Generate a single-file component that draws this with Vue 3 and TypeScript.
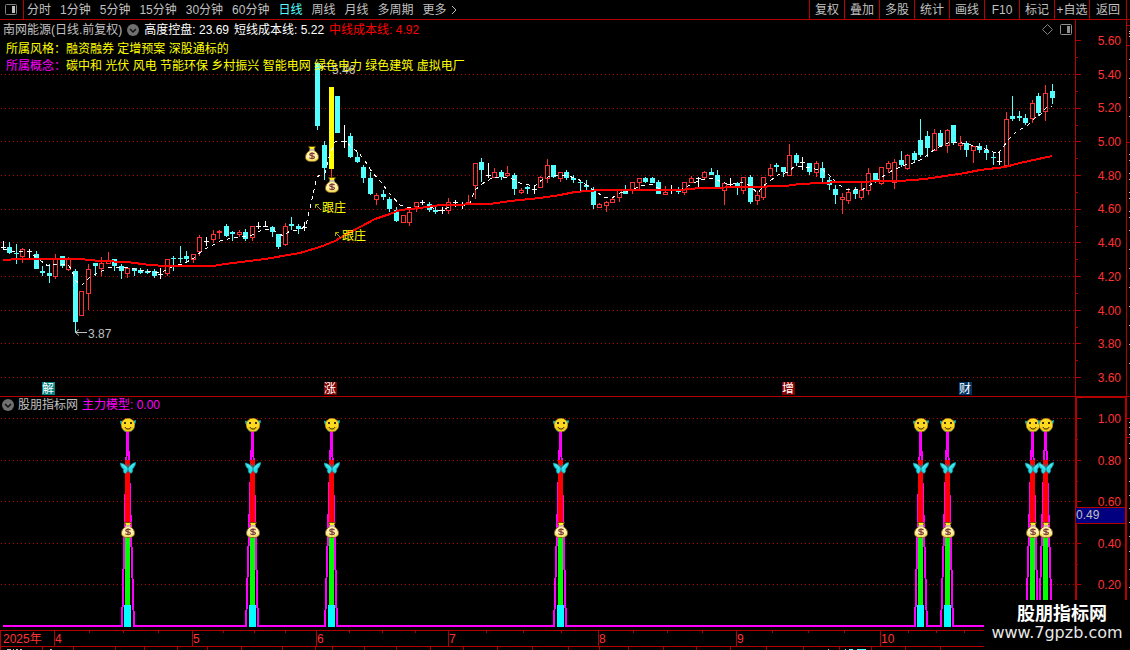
<script setup lang="ts">
type Kind = 'r' | 'c' | 'w' | 'y'
type Candle = [kind: Kind, high: number, top: number, bottom: number, low: number]

const periods = ['分时', '1分钟', '5分钟', '15分钟', '30分钟', '60分钟', '日线', '周线', '月线', '多周期']
const tools = ['复权', '叠加', '多股', '统计', '画线', 'F10', '标记', '+自选', '返回']
const prices = ['5.60', '5.40', '5.20', '5.00', '4.80', '4.60', '4.40', '4.20', '4.00', '3.80', '3.60']
const priceY = [40, 74, 108, 141, 175, 209, 242, 276, 310, 343, 377]
const levels = ['1.00', '0.80', '0.60', '0.40', '0.20']
const levelY = [418, 460, 501, 543, 584]

const candles: Candle[] = [
  ['w', 241, 247, 247, 250], ['c', 242, 247, 253, 254], ['c', 244, 253, 254, 264], ['r', 248, 249, 257, 263],
  ['w', 249, 251, 251, 258], ['c', 251, 254, 269, 269], ['c', 266, 271, 273, 276], ['c', 264, 273, 276, 283],
  ['r', 254, 259, 277, 279], ['c', 256, 256, 266, 268], ['r', 257, 259, 270, 271], ['c', 269, 271, 322, 332],
  ['r', 291, 291, 316, 316], ['r', 264, 269, 294, 310], ['c', 263, 263, 266, 276], ['r', 257, 263, 269, 276],
  ['r', 252, 261, 264, 264], ['c', 259, 259, 266, 271], ['c', 264, 266, 271, 279], ['r', 267, 268, 274, 278],
  ['c', 268, 268, 271, 276], ['c', 268, 270, 273, 274], ['c', 269, 271, 273, 274], ['c', 269, 271, 276, 278],
  ['w', 268, 274, 274, 279], ['r', 259, 259, 274, 276], ['c', 256, 258, 259, 271], ['c', 246, 258, 259, 263],
  ['c', 251, 256, 259, 263], ['r', 254, 254, 260, 263], ['r', 235, 237, 252, 256], ['w', 237, 241, 241, 246],
  ['r', 230, 234, 240, 243], ['r', 230, 231, 233, 239], ['c', 224, 226, 236, 237], ['c', 231, 232, 234, 241],
  ['r', 230, 232, 235, 237], ['c', 229, 232, 239, 241], ['r', 226, 226, 238, 241], ['w', 222, 226, 226, 229],
  ['w', 221, 226, 226, 227], ['c', 226, 227, 232, 237], ['c', 234, 234, 247, 249], ['r', 223, 226, 245, 246],
  ['c', 217, 224, 226, 230], ['c', 224, 226, 229, 234], ['w', 222, 227, 227, 231], ['w', 0, 0, 0, 0],
  ['c', 63, 63, 126, 130], ['c', 141, 145, 168, 180], ['y', 87, 87, 169, 178], ['c', 96, 96, 133, 133],
  ['w', 125, 141, 141, 148], ['c', 133, 136, 157, 158], ['c', 152, 157, 162, 163], ['c', 165, 167, 178, 183],
  ['c', 172, 178, 194, 195], ['r', 193, 195, 200, 205], ['c', 190, 194, 197, 200], ['c', 197, 199, 209, 212],
  ['c', 207, 210, 221, 222], ['r', 215, 215, 223, 223], ['r', 210, 212, 223, 226], ['r', 202, 202, 207, 212],
  ['w', 200, 202, 202, 205], ['c', 202, 204, 210, 212], ['c', 207, 210, 212, 214], ['w', 207, 210, 210, 214],
  ['r', 198, 202, 211, 214], ['w', 200, 202, 202, 207], ['w', 202, 204, 204, 209], ['r', 195, 202, 203, 203],
  ['r', 163, 163, 186, 199], ['c', 158, 162, 170, 182], ['w', 163, 175, 175, 178], ['r', 168, 172, 178, 178],
  ['c', 170, 172, 177, 180], ['r', 166, 173, 176, 177], ['c', 173, 175, 189, 195], ['r', 188, 190, 193, 194],
  ['c', 186, 187, 189, 194], ['w', 186, 189, 189, 194], ['r', 176, 177, 188, 188], ['r', 159, 165, 179, 183],
  ['c', 165, 165, 177, 178], ['r', 172, 172, 179, 182], ['c', 170, 172, 178, 180], ['c', 175, 178, 180, 183],
  ['c', 180, 182, 183, 192], ['c', 180, 185, 187, 190], ['c', 187, 189, 205, 209], ['r', 203, 204, 208, 208],
  ['r', 201, 202, 206, 212], ['r', 198, 199, 203, 203], ['r', 190, 190, 198, 202], ['c', 185, 190, 194, 194],
  ['r', 182, 182, 190, 194], ['r', 178, 178, 183, 190], ['c', 177, 178, 182, 183], ['c', 177, 178, 183, 183],
  ['c', 180, 182, 194, 194], ['r', 186, 192, 195, 195], ['w', 185, 190, 190, 194], ['c', 187, 190, 192, 194],
  ['r', 182, 182, 193, 195], ['r', 176, 178, 183, 183], ['w', 177, 178, 178, 188], ['r', 171, 172, 178, 180],
  ['c', 168, 172, 175, 175], ['c', 170, 175, 189, 189], ['r', 183, 183, 191, 205], ['w', 178, 184, 184, 187],
  ['c', 182, 183, 188, 195], ['r', 177, 177, 191, 194], ['c', 175, 177, 202, 204], ['r', 191, 195, 201, 205],
  ['r', 177, 177, 198, 200], ['r', 164, 168, 176, 177], ['c', 163, 165, 167, 172], ['c', 167, 167, 172, 177],
  ['r', 144, 155, 176, 176], ['c', 153, 155, 163, 166], ['w', 157, 162, 162, 170], ['c', 163, 163, 172, 175],
  ['r', 161, 163, 173, 177], ['c', 162, 168, 178, 182], ['c', 177, 180, 185, 190], ['c', 185, 189, 195, 204],
  ['r', 193, 197, 200, 214], ['r', 188, 192, 201, 204], ['c', 187, 190, 194, 199], ['r', 182, 190, 198, 200],
  ['r', 168, 173, 191, 195], ['c', 173, 173, 181, 183], ['r', 167, 167, 184, 185], ['r', 161, 163, 169, 173],
  ['r', 159, 162, 183, 189], ['c', 151, 160, 165, 167], ['r', 154, 155, 169, 170], ['c', 151, 153, 160, 163],
  ['c', 119, 140, 155, 157], ['c', 131, 136, 148, 157], ['r', 129, 133, 151, 151], ['c', 130, 133, 146, 146],
  ['r', 129, 130, 146, 153], ['c', 125, 125, 143, 145], ['r', 136, 143, 146, 150], ['c', 141, 143, 150, 157],
  ['r', 146, 146, 151, 163], ['c', 143, 146, 150, 153], ['c', 145, 150, 153, 160], ['c', 152, 157, 158, 165],
  ['w', 153, 161, 161, 165], ['r', 112, 119, 166, 166], ['c', 96, 116, 119, 121], ['c', 111, 116, 118, 121],
  ['c', 114, 118, 123, 125], ['r', 100, 103, 119, 123], ['c', 93, 96, 113, 116], ['r', 85, 93, 112, 121],
  ['c', 84, 91, 98, 104],
]

const barX = (i: number): number => Math.floor(3.25 + i * 6.555)
const colors: Record<Kind, string> = { r: '#ff3232', c: '#54ffff', w: '#ffffff', y: '#ffff00' }
const bars = candles
  .map(([kind, high, top, bottom, low], i) => ({ kind, high, top, bottom, low, x: barX(i), color: colors[kind] }))
  .filter((b) => b.low > 0)

const midLine =
  '3,260 20,259 80,259 100,261 127,262 150,265 165,266 213,266 225,264 265,259 300,253 320,247 335,241 345,235 360,227 375,219 390,214 400,210 420,208 440,205 490,204 510,201 540,198 560,195 575,192 600,190 680,190 700,188 750,187 785,186 800,184 840,182 900,181 925,179 945,176 965,173 980,170 1005,167 1020,163 1052,156'
const shortLine =
  '3,249 16,252 28,251 36,257 48,266 57,264 68,264 72,271 76,281 82,285 90,277 100,272 108,268 115,267 130,268 145,271 160,273 172,267 185,263 194,258 203,250 213,245 220,241 232,238 250,236 262,230 272,229 277,232 283,236 290,231 300,230 306,225 312,199 317,177 320,175 325,173 329,157 335,142 346,141 351,147 358,152 365,161 372,172 380,181 390,194 400,205 408,208 418,207 428,206 440,211 452,206 465,205 470,203 475,190 482,184 492,178 505,177 515,180 522,184 535,186 543,179 550,176 565,175 578,179 588,186 595,191 604,197 612,198 620,193 632,190 640,186 652,184 658,188 665,190 680,190 690,185 700,180 712,178 722,182 730,185 740,182 746,183 752,188 758,193 763,186 770,181 778,175 788,172 795,166 800,166 815,169 822,169 830,176 838,184 845,189 862,190 870,185 878,180 885,175 893,170 905,165 917,162 925,157 935,149 950,142 962,143 975,146 985,149 998,154 1003,147 1010,138 1017,131 1027,126 1035,118 1041,114 1047,107 1052,106'

const events = [
  { x: 42, text: '解', fill: '#008080' },
  { x: 324, text: '涨', fill: '#800000' },
  { x: 782, text: '增', fill: '#800000' },
  { x: 959, text: '财', fill: '#003468' },
]

const spikes = [19, 38, 50, 85, 140, 144, 157, 159]
const spikeX = spikes.map(barX)
const modelLine = [
  '3,626',
  ...spikes.flatMap((i) => [`${barX(i - 1) + 1},626`, `${barX(i) + 0.5},419`, `${barX(i + 1)},626`]),
  '1052,626',
].join(' ')

const months = [
  { label: '2025年', span: 54 },
  { label: '4', span: 138 },
  { label: '5', span: 124 },
  { label: '6', span: 132 },
  { label: '7', span: 150 },
  { label: '8', span: 138 },
  { label: '9', span: 144 },
  { label: '10', span: 195 },
]
const monthColumns = months.map((m) => `minmax(0, ${m.span}fr)`).join(' ')
const weekTicks = [89, 123, 158, 223, 254, 285, 349, 382, 415, 486, 523, 561, 633, 667, 702, 772, 808, 844, 908, 936, 964]
const footTicks = [0, 42, 73, 115, 144, 177, 207, 241, 282, 315, 332, 364, 396, 430, 463, 497, 532, 568, 599, 628, 663, 696, 730, 766, 803, 839, 871, 905, 940]
const edgeMarks = [31, 33, 36, 59, 78, 97, 116, 154, 160, 173, 179, 192, 198, 211, 217, 230, 249, 268, 287, 306, 325, 344, 363]
const edgeMarksLow = [422, 427, 434, 443, 458, 481, 495, 508, 522, 536, 551, 569, 587]
</script>

<template>
  <div class="app">
    <svg class="defs" aria-hidden="true">
      <symbol id="bag" viewBox="0 0 14 16">
        <path d="M3.5 0.5 L10.5 0.5 L9 3.5 L5 3.5Z" fill="#ffee20" stroke="#5a4000" stroke-width="0.8" />
        <path d="M5 4.5 L9 4.5 C12 6 13.5 8.5 13.5 11 C13.5 14 11.5 15.5 7 15.5 C2.5 15.5 0.5 14 0.5 11 C0.5 8.5 2 6 5 4.5Z" fill="#fff4a8" stroke="#8a6418" stroke-width="1" />
        <path d="M1.5 12 C2.5 15 11.5 15 12.5 12" fill="none" stroke="#f2dc48" stroke-width="1.2" />
        <path d="M4.5 4 H9.5" stroke="#ffffff" stroke-width="1.2" />
        <path d="M9.5 8 C8.5 6.8 4.8 6.7 4.7 8.5 C4.7 10.3 9.5 9.3 9.5 11.2 C9.4 13 5.3 13 4.3 11.7 M7 6.3 V13.3" fill="none" stroke="#843c38" stroke-width="1.2" />
      </symbol>
      <symbol id="smile" viewBox="0 0 14 14">
        <circle cx="7" cy="7" r="6.8" fill="#ffd820" stroke="#9a7410" stroke-width="0.5" />
        <path d="M2 9 A5.5 5.5 0 0 0 12 9" fill="none" stroke="#f0bc14" stroke-width="1" />
        <rect x="3" y="4" width="2" height="2" fill="#403000" />
        <rect x="9" y="4" width="2" height="2" fill="#403000" />
        <path d="M4 9 C4.5 11.7 9.5 11.7 10 9" fill="none" stroke="#302400" stroke-width="1" />
      </symbol>
      <symbol id="butterfly" viewBox="0 0 16 12">
        <path d="M7.5 5.5 C5 2 2.5 1 0 1 C0.5 4 2 6.5 3.5 7 C2.5 9 4 11.5 5.5 11.8 C7 10.5 7.5 9 8 8 C8.5 9 9.5 11 11 11.4 C12.8 10.5 13 8.5 12.5 7 C14 6 15.5 3 16 0.5 C13 0.5 10.5 2.5 8.5 5.5Z" fill="#28dce8" stroke="#0a8890" stroke-width="0.6" />
        <path d="M8 8 V5 M8 5 L6 1.5 M8 5 L10 1.5" fill="none" stroke="#0c8890" stroke-width="0.8" />
        <path d="M2 2.5 L6.5 6 M14 2 L9.5 6" stroke="#70f4f8" stroke-width="0.8" />
      </symbol>
    </svg>

    <nav class="toolbar">
      <button class="layout" aria-label="布局">
        <svg width="12" height="11" viewBox="0 0 12 11"><rect x="0.5" y="0.5" width="11" height="10" rx="1" fill="none" stroke="#808080" /><rect x="7" y="2" width="3" height="7" fill="#c0c0c0" /></svg>
      </button>
      <div class="periods">
        <button v-for="p in periods" :key="p" :class="{ active: p === '日线' }">{{ p }}</button>
        <button class="more">更多<svg width="6" height="10" viewBox="0 0 6 10"><path d="M1 1 L5 5 L1 9" fill="none" stroke="#c0c0c0" /></svg></button>
      </div>
      <div class="tools">
        <button v-for="t in tools" :key="t">{{ t }}</button>
      </div>
      <span class="edge-cap"></span>
    </nav>

    <section class="panel">
      <div class="plot">
        <svg class="chart" viewBox="0 20 1075 376">
          <g class="grid">
            <line v-for="y in priceY.slice(1)" :key="y" x1="1" x2="1075" :y1="y + 0.5" :y2="y + 0.5" />
          </g>
          <g shape-rendering="crispEdges">
            <template v-for="b in bars" :key="b.x">
              <rect :x="b.x" :y="b.high" width="1" :height="b.low - b.high" :fill="b.kind === 'y' ? '#ff3232' : b.color" />
              <rect v-if="b.kind === 'w'" :x="b.x - 2" :y="b.top" width="5" height="1" fill="#ffffff" />
              <rect v-else-if="b.kind === 'r' && b.bottom - b.top > 2" :x="b.x - 1.5" :y="b.top + 0.5" width="4" :height="b.bottom - b.top - 1" fill="#000000" stroke="#ff3232" />
              <rect v-else :x="b.x - 2" :y="b.top" width="5" :height="b.bottom - b.top" :fill="b.color" />
            </template>
            <polyline :points="shortLine" fill="none" stroke="#ffffff" stroke-dasharray="4 4" />
            <polyline :points="midLine" fill="none" stroke="#ff0000" stroke-width="2" />
          </g>
          <use href="#bag" x="305" y="146" width="14" height="16" />
          <use href="#bag" x="325" y="177" width="14" height="16" />
          <g fill="none" stroke="#a8a800">
            <path d="M315.5 208 V204.5 H319 M315.5 204.5 L321 210" />
            <path d="M335.5 236 V232.5 H339 M335.5 232.5 L341 238" />
          </g>
          <g fill="none" stroke="#c0c0c0">
            <path d="M75 332.5 H87 M79 329.5 L75.5 332.5 L79 335.5" />
            <path d="M319 66.5 H330 M323 63.5 L319.5 66.5 L323 69.5" />
          </g>
          <g class="note" fill="#ffff00">
            <text x="322" y="212">跟庄</text>
            <text x="342" y="240">跟庄</text>
          </g>
          <g class="note" fill="#c0c0c0">
            <text x="88" y="338">3.87</text>
            <text x="332" y="74">5.46</text>
          </g>
          <g class="note" fill="#ffffff">
            <template v-for="e in events" :key="e.x">
              <rect :x="e.x" y="382" width="13" height="13" :fill="e.fill" />
              <text :x="e.x" y="393">{{ e.text }}</text>
            </template>
          </g>
        </svg>

        <header class="legend">
          <div class="legend-row">
            <span>南网能源(日线.前复权)</span>
            <button class="fold" aria-label="收起主图">
              <svg width="12" height="12" viewBox="0 0 12 12"><circle cx="6" cy="6" r="6" fill="#707070" /><path d="M3 5 L6 8 L9 5" fill="none" stroke="#101010" stroke-width="1.5" /></svg>
            </button>
            <span class="white">高度控盘: 23.69</span>
            <span class="white">短线成本线: 5.22</span>
            <span class="red">中线成本线: 4.92</span>
          </div>
          <div class="tag-row yellow"><span>所属风格：</span><span>融资融券 定增预案 深股通标的</span></div>
          <div class="tag-row yellow"><span class="magenta">所属概念：</span><span>碳中和 光伏 风电 节能环保 乡村振兴 智能电网 绿色电力 绿色建筑 虚拟电厂</span></div>
        </header>
        <div class="corner">
          <button aria-label="标记点"><svg width="11" height="11" viewBox="0 0 11 11"><path d="M5.5 0.5 L10.5 5.5 L5.5 10.5 L0.5 5.5Z" fill="none" stroke="#808080" /></svg></button>
          <button aria-label="侧栏"><svg width="12" height="11" viewBox="0 0 12 11"><rect x="0.5" y="0.5" width="11" height="10" rx="1" fill="none" stroke="#909090" /><rect x="7" y="2" width="3" height="7" fill="#909090" /></svg></button>
        </div>
      </div>

      <div class="axis">
        <svg class="ticks" viewBox="0 20 51 376" preserveAspectRatio="none" shape-rendering="crispEdges">
          <rect x="0" y="20" width="1" height="376" />
          <rect v-for="y in priceY" :key="y" x="1" :y="y" width="5" height="1" />
          <rect v-for="y in priceY.slice(0, -1)" :key="'m' + y" x="1" :y="y + 17" width="2" height="1" />
        </svg>
        <div class="labels price"><span v-for="p in prices" :key="p">{{ p }}</span></div>
      </div>
      <div class="edge">
        <svg viewBox="0 20 4 376" preserveAspectRatio="none" shape-rendering="crispEdges">
          <rect x="0" y="20" width="1" height="376" fill="#b40000" />
          <rect v-for="y in [25, 45, 142]" :key="y" x="1" :y="y" width="3" height="1" fill="#b40000" />
          <rect v-for="y in edgeMarks" :key="'e' + y" x="3" :y="y" width="1" height="1" fill="#c0c0c0" />
        </svg>
      </div>
    </section>

    <section class="panel lower">
      <div class="plot">
        <svg class="chart" viewBox="0 397 1075 233">
          <g class="grid">
            <line v-for="y in levelY" :key="y" x1="1" x2="1075" :y1="y + 0.5" :y2="y + 0.5" />
          </g>
          <polyline :points="modelLine" fill="none" stroke="#ff00ff" stroke-width="2" stroke-linejoin="bevel" shape-rendering="crispEdges" />
          <template v-for="x in spikeX" :key="x">
            <g shape-rendering="crispEdges">
              <rect :x="x - 2" y="460" width="5" height="66" fill="#ff0000" />
              <rect :x="x - 2" y="534" width="5" height="71" fill="#00ff00" />
              <rect :x="x - 3" y="605" width="7" height="22" fill="#00ffff" />
            </g>
            <use href="#butterfly" :x="x - 7" y="420" width="16" height="12" />
            <use href="#smile" :x="x - 6" y="418" width="14" height="14" />
            <use href="#butterfly" :x="x - 7" y="462" width="16" height="12" />
            <use href="#bag" :x="x - 6" y="522" width="14" height="16" />
          </template>
        </svg>
        <header class="legend sub">
          <div class="legend-row">
            <button class="fold" aria-label="收起副图">
              <svg width="12" height="12" viewBox="0 0 12 12"><circle cx="6" cy="6" r="6" fill="#707070" /><path d="M3 5 L6 8 L9 5" fill="none" stroke="#101010" stroke-width="1.5" /></svg>
            </button>
            <span>股朋指标网</span>
            <span class="magenta">主力模型: 0.00</span>
          </div>
        </header>
      </div>

      <div class="axis framed">
        <svg class="ticks" viewBox="0 397 51 233" preserveAspectRatio="none" shape-rendering="crispEdges">
          <rect v-for="y in levelY" :key="y" x="1" :y="y" width="5" height="1" />
          <rect v-for="y in levelY" :key="'m' + y" x="1" :y="y + 21" width="2" height="1" />
        </svg>
        <div class="labels level"><span v-for="l in levels" :key="l">{{ l }}</span></div>
        <output class="cursor">0.49</output>
      </div>
      <div class="edge">
        <svg viewBox="0 397 4 233" preserveAspectRatio="none" shape-rendering="crispEdges">
          <rect x="0" y="397" width="1" height="233" fill="#b40000" />
          <rect v-for="y in [418, 437]" :key="y" x="1" :y="y" width="3" height="1" fill="#b40000" />
          <rect v-for="y in edgeMarksLow" :key="'e' + y" x="3" :y="y" width="1" height="1" fill="#c0c0c0" />
        </svg>
      </div>
    </section>

    <div class="timeline">
      <div class="months" :style="{ gridTemplateColumns: monthColumns }">
        <span v-for="m in months" :key="m.label">{{ m.label }}</span>
        <svg viewBox="0 0 1075 15" preserveAspectRatio="none" shape-rendering="crispEdges">
          <rect v-for="x in weekTicks" :key="x" :x="x" y="0" width="1" height="2" />
        </svg>
      </div>
    </div>
    <div class="foot">
      <svg viewBox="0 0 1130 3" preserveAspectRatio="none" shape-rendering="crispEdges">
        <rect v-for="x in footTicks" :key="x" :x="x" y="0" width="1" height="3" fill="#b40000" />
        <path d="M7 2.5 H11 M13 2.5 H14 M16 2.5 H18 M20 2.5 H22 M50 2.5 H52 M828 2.5 H829" stroke="#c0c0c0" />
        <path d="M845 2.5 H846 M849 2.5 H853 M857 2.5 H866" stroke="#54ffff" />
      </svg>
    </div>

    <aside class="brand">
      <strong>股朋指标网</strong>
      <span>www.7gpzb.com</span>
    </aside>
  </div>
</template>

<style>
body {
  margin: 0;
  background: #000;
}
</style>

<style scoped>
.app {
  position: relative;
  overflow: hidden;
  background: #000;
  color: #c0c0c0;
  font: 12px/16px "Liberation Sans", "Noto Sans CJK SC", sans-serif;
}
svg {
  display: block;
}
.defs {
  position: absolute;
  width: 0;
  height: 0;
}
button {
  padding: 0;
  border: 0;
  background: none;
  color: inherit;
  font: inherit;
  white-space: nowrap;
}
.toolbar {
  display: flex;
  height: 19px;
  border-bottom: 1px solid #b40000;
}
.layout {
  display: flex;
  align-items: center;
  justify-content: center;
  width: 24px;
  box-sizing: border-box;
  padding-right: 2px;
  border-right: 1px solid #b40000;
}
.periods {
  display: flex;
  flex: 1;
  gap: 9px;
  padding-left: 3px;
}
.periods .active {
  color: #54ffff;
}
.more {
  display: flex;
  align-items: center;
  gap: 4px;
}
.tools {
  display: flex;
}
.tools button {
  width: 35px;
  box-sizing: border-box;
  border-left: 1px solid #b40000;
  text-align: center;
}
.tools button:last-child {
  width: 37px;
}
.edge-cap {
  width: 3px;
  border-left: 1px solid #b40000;
}
.panel {
  display: grid;
  grid-template-columns: minmax(0, 1fr) 51px 4px;
}
.lower {
  border-top: 1px solid #b40000;
}
.plot,
.axis,
.edge {
  position: relative;
}
.chart {
  width: 100%;
  height: auto;
}
.grid line {
  stroke: #b40000;
  stroke-dasharray: 1 3;
  shape-rendering: crispEdges;
}
.note {
  font-size: 12px;
}
.legend {
  position: absolute;
  top: 2px;
  left: 3px;
  white-space: nowrap;
}
.legend.sub {
  top: 0;
  left: 2px;
}
.legend-row {
  display: flex;
  align-items: center;
  gap: 5px;
}
.legend.sub .legend-row {
  gap: 4px;
}
.tag-row {
  display: flex;
  height: 17px;
  line-height: 17px;
  padding-left: 3px;
}
.legend-row + .tag-row {
  padding-top: 3px;
}
.white {
  color: #fff;
}
.red {
  color: #f00;
}
.yellow {
  color: #ff0;
}
.magenta {
  color: #f0f;
}
.corner {
  position: absolute;
  top: 4px;
  right: 3px;
  display: flex;
  gap: 7px;
}
.ticks,
.edge svg,
.months svg {
  position: absolute;
  inset: 0;
  width: 100%;
  height: 100%;
  fill: #b40000;
}
.labels {
  display: flex;
  flex-direction: column;
  justify-content: space-between;
  height: 100%;
  box-sizing: border-box;
  padding-right: 5px;
  color: #ff3232;
  line-height: 12px;
  text-align: right;
}
.price {
  padding-top: 15px;
  padding-bottom: 12px;
}
.level {
  padding-top: 16px;
  padding-bottom: 39px;
}
.framed {
  box-shadow: inset 2px 1px #b40000, inset -1px 0 #b40000;
}
.cursor {
  position: absolute;
  top: 110px;
  left: 1px;
  right: 1px;
  border: solid #b40000;
  border-width: 1px 0;
  background: #000080;
  line-height: 15px;
}
.timeline {
  border: solid #b40000;
  border-width: 1px 0;
  padding-right: 55px;
}
.months {
  position: relative;
  display: grid;
  height: 15px;
  line-height: 16px;
  color: #ff3232;
}
.months span {
  border-left: 1px solid #b40000;
}
.months span:first-child {
  padding-left: 2px;
}
.foot svg {
  width: 100%;
  height: 3px;
}
.brand {
  position: absolute;
  right: 0;
  bottom: 0;
  display: flex;
  flex-direction: column;
  align-items: center;
  width: 146px;
  height: 50px;
  padding-top: 4px;
  box-sizing: border-box;
  background: #000;
  color: #fff;
}
.brand strong {
  padding-left: 10px;
  font-size: 18px;
  line-height: 20px;
}
.brand span {
  color: #e8e8e8;
  font: 16px/18px "DejaVu Sans", sans-serif;
}
</style>
